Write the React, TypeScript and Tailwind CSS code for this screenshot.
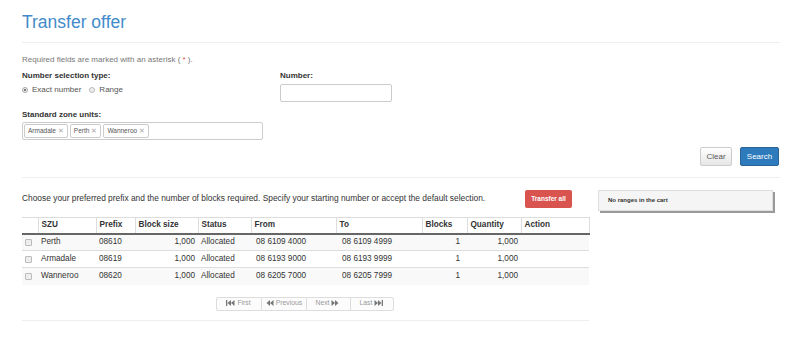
import React from 'react';

const rows = [
  { szu: 'Perth', prefix: '08610', from: '08 6109 4000', to: '08 6109 4999' },
  { szu: 'Armadale', prefix: '08619', from: '08 6193 9000', to: '08 6193 9999' },
  { szu: 'Wanneroo', prefix: '08620', from: '08 6205 7000', to: '08 6205 7999' },
];

function Arrow({ dir, bar }: { dir: 'l' | 'r'; bar?: boolean }) {
  // tiny double-triangle glyph with optional end bar
  return (
    <svg width="9" height="6" viewBox="0 0 9 6" className="block -translate-y-[1px]">
      {dir === 'l' ? (
        <g fill="#777">
          {bar && <rect x="0" y="0" width="1.3" height="6" />}
          <polygon points="5,0 5,6 1.5,3" />
          <polygon points="8.5,0 8.5,6 5,3" />
        </g>
      ) : (
        <g fill="#777">
          <polygon points="0.5,0 0.5,6 4,3" />
          <polygon points="4,0 4,6 7.5,3" />
          {bar && <rect x="7.7" y="0" width="1.3" height="6" />}
        </g>
      )}
    </svg>
  );
}

function Tag({ label }: { label: string }) {
  return (
    <span className="flex items-center gap-[2px] h-[14px] px-[3px] border border-[#ccc] rounded-[2px] text-[6.5px] text-[#555]">
      {label}
      <span className="text-[#aaa] text-[7px]">✕</span>
    </span>
  );
}

export default function App() {
  return (
    <div className="w-[800px] h-[346px] bg-white overflow-hidden px-[22px] text-[#333]" style={{ fontFamily: '"Liberation Sans", Arial, sans-serif' }}>
      {/* Header */}
      <h1 className="pt-[10px] h-[42px] text-[17.5px] leading-[24px] text-[#428bca] font-normal">Transfer offer</h1>
      <div className="border-t border-[#eee] w-[758px]" />

      {/* Form */}
      <div className="pt-[12px] text-[8px] leading-[10px] text-[#777]">
        Required fields are marked with an asterisk ( <span className="text-[#d9534f]">*</span> ).
      </div>

      <div className="flex pt-[6px]">
        <div className="w-[258px]">
          <div className="text-[8px] leading-[10px] font-bold text-[#333]">Number selection type:</div>
          <div className="flex items-center gap-[4px] pt-[4px] text-[8px] leading-[10px] text-[#555]">
            <span className="w-[6px] h-[6px] rounded-full border border-[#aaa] bg-[#eee] flex items-center justify-center">
              <span className="w-[2px] h-[2px] rounded-full bg-[#555]" />
            </span>
            <span>Exact number</span>
            <span className="ml-[4px] w-[6px] h-[6px] rounded-full border border-[#bbb] bg-[#eee]" />
            <span>Range</span>
          </div>
        </div>
        <div>
          <div className="text-[8px] leading-[10px] font-bold text-[#333]">Number:</div>
          <div className="mt-[3px] w-[112px] h-[18px] border border-[#ccc] rounded-[2px]" />
        </div>
      </div>

      <div className="pt-[8px] text-[8px] leading-[10px] font-bold text-[#333]">Standard zone units:</div>
      <div className="mt-[2px] w-[241px] h-[18px] border border-[#ccc] rounded-[2px] flex items-center gap-[2px] px-[1px]">
        <Tag label="Armadale" />
        <Tag label="Perth" />
        <Tag label="Wanneroo" />
      </div>

      <div className="flex justify-end gap-[8px] pt-[7px] w-[757px]">
        <button className="h-[19px] w-[32px] border border-[#ccc] rounded-[2px] bg-gradient-to-b from-white to-[#e6e6e6] text-[8px] text-[#555]">Clear</button>
        <button className="h-[19px] w-[39px] border border-[#2a6496] rounded-[2px] bg-[#2d7bbd] text-[8px] text-white">Search</button>
      </div>
      <div className="mt-[11px] border-t border-[#eee] w-[758px]" />

      {/* Results */}
      <div className="flex gap-[9px] pt-[11px]">
        <div className="w-[567px]">
          <div className="flex items-center justify-between h-[19px] pr-[17px]">
            <span className="text-[8.4px] text-[#333]">
              Choose your preferred prefix and the number of blocks required. Specify your starting number or accept the default selection.
            </span>
            <button className="h-[18px] w-[47px] rounded-[2px] bg-[#d9534f] text-white text-[6.5px] font-bold">Transfer all</button>
          </div>

          <table className="mt-[9px] w-[567px] border-collapse text-[8.2px] table-fixed">
            <colgroup>
              <col className="w-[16px]" />
              <col className="w-[58px]" />
              <col className="w-[39px]" />
              <col className="w-[63px]" />
              <col className="w-[53px]" />
              <col className="w-[85px]" />
              <col className="w-[86px]" />
              <col className="w-[45px]" />
              <col className="w-[54px]" />
              <col className="w-[68px]" />
            </colgroup>
            <thead>
              <tr className="h-[16px] border-t border-[#ddd] border-b-2 border-b-[#666] text-left font-bold">
                {['', 'SZU', 'Prefix', 'Block size', 'Status', 'From', 'To', 'Blocks', 'Quantity', 'Action'].map((h, i) => (
                  <th key={i} className={`px-[3px] font-bold ${i > 0 ? 'border-l border-[#ddd]' : ''} ${i === 9 ? 'border-r border-[#ddd]' : ''}`}>{h}</th>
                ))}
              </tr>
            </thead>
            <tbody>
              {rows.map((r, i) => (
                <tr key={r.szu} className={`h-[17px] border-t border-[#ddd] ${i % 2 === 0 ? 'bg-[#f9f9f9]' : 'bg-white'} text-[#333]`}>
                  <td className="pl-[3px]">
                    <span className="block w-[7px] h-[7px] border border-[#bbb] rounded-[1px] bg-[#eee]" />
                  </td>
                  <td className="px-[3px]">{r.szu}</td>
                  <td className="px-[3px]">{r.prefix}</td>
                  <td className="px-[3px] text-right">1,000</td>
                  <td className="px-[3px]">Allocated</td>
                  <td className="px-[5px]">{r.from}</td>
                  <td className="px-[6px]">{r.to}</td>
                  <td className="px-[7px] text-right">1</td>
                  <td className="px-[3px] text-right">1,000</td>
                  <td />
                </tr>
              ))}
            </tbody>
          </table>

          <div className="flex justify-center pt-[12px] pr-[2px]">
            <div className="flex h-[14px] border border-[#ddd] rounded-[2px] text-[6.8px] leading-none text-[#999] bg-[#fcfcfc]">
              <span className="w-[44px] flex items-center justify-center gap-[2px]"><Arrow dir="l" bar />First</span>
              <span className="w-[45px] flex items-center justify-center gap-[2px] border-l border-[#ddd]"><Arrow dir="l" />Previous</span>
              <span className="w-[44px] flex items-center justify-center gap-[2px] border-l border-[#ddd]">Next<Arrow dir="r" /></span>
              <span className="w-[43px] flex items-center justify-center gap-[2px] border-l border-[#ddd]">Last<Arrow dir="r" bar /></span>
            </div>
          </div>
          <div className="mt-[9px] border-t border-[#eee]" />
        </div>

        <div className="pt-[1px]">
          <div className="w-[175px] h-[21px] bg-[#f5f5f5] border border-[#ddd] shadow-[2px_2px_0_#9a9a9a] flex items-center pl-[9px] text-[6px] font-bold text-[#333]">
            No ranges in the cart
          </div>
        </div>
      </div>
    </div>
  );
}
